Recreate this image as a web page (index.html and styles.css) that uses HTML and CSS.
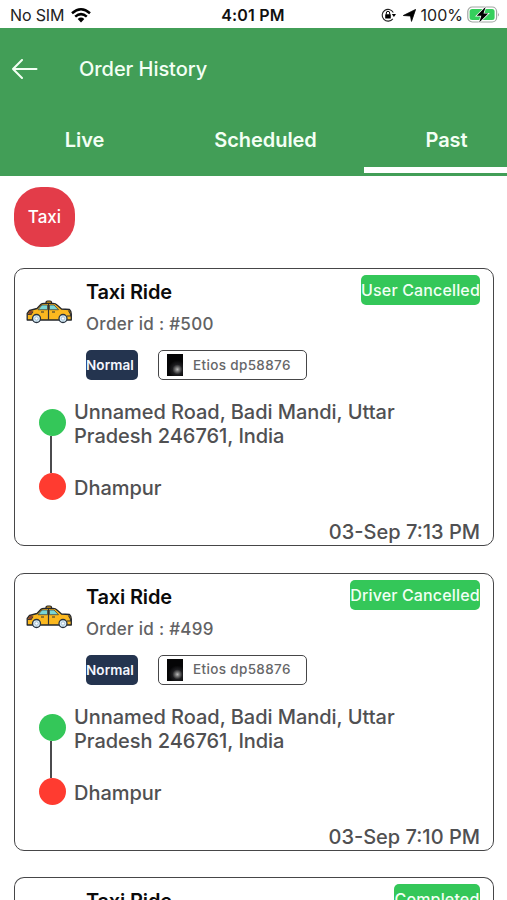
FILE: index.html
```html
<!DOCTYPE html>
<html lang="en">
<head>
<meta charset="utf-8">
<title>Order History</title>
<link rel="stylesheet" href="styles.css">
</head>
<body>
<svg class="defs" aria-hidden="true">
  <symbol id="taxi" viewBox="0 0 46 24">
    <path d="M20 4V2.2Q20 1 21.500 1H24Q25.500 1 25.500 2.200V4Z" fill="#d99a1c" stroke="#222" stroke-width="1.200"/>
    <path d="M1.200 19.500V13.500L3.500 10.500Q8 9.300 11 8.500L15 4.300Q16 3.300 18 3.300H27Q29.500 3.300 31 5L35.500 9L43.500 9.500Q45.300 11 45.300 14V20H1.200Z" fill="#fbb81f" stroke="#24272b" stroke-width="1.300" stroke-linejoin="round"/>
    <path d="M12 9.700L16 5H21.500V9.700ZM23.500 9.700V5H28L32.500 9.700Z" fill="#79d6d5" stroke="#333" stroke-width=".7"/>
    <path d="M22.500 4V20M1.500 14.500H5L7 11.500M42.500 10.500L44.500 14V16H41M15 12H18M26 12H29" fill="none" stroke="#333" stroke-width="1.200"/>
    <path d="M2 14L4 10.800H7L5 14.500Z" fill="#8c4528"/>
    <g fill="#d7edf9" stroke="#293440" stroke-width="1.300"><circle cx="10.500" cy="18.500" r="4"/><circle cx="37" cy="18.500" r="4"/></g>
    <g fill="#fff" stroke="#8daac0" stroke-width=".7"><circle cx="10.500" cy="18.500" r="1.700"/><circle cx="37" cy="18.500" r="1.700"/></g>
  </symbol>
</svg>
<header class="status">
  <div class="carrier"><span>No SIM</span>
    <svg width="20" height="15" viewBox="0 0 20 15"><g fill="none" stroke="#000" stroke-width="2.500"><path d="M1 5.200Q10-2.600 19 5.200"/><path d="M4.200 8.600Q10 3.600 15.800 8.600"/></g><path d="M6.700 11Q10 8.200 13.300 11L10 14.500Z"/></svg>
  </div>
  <div class="clock">4:01 PM</div>
  <div class="indicators">
    <svg width="15" height="14" viewBox="0 0 15 14"><path d="M11.800 10.800A5.900 5.900 0 1 1 12.300 4.500" fill="none" stroke="#222" stroke-width="1.100"/><path d="M10.800 6H15L12.900 9Z"/><rect x="4.200" y="6.200" width="5.600" height="4.200" rx=".5"/><path d="M5.300 6.500V5A1.700 1.700 0 0 1 8.700 5V6.500" fill="none" stroke="#000"/></svg>
    <svg class="arrow" width="13" height="13" viewBox="0 0 13 13"><path d="M12.600.4L8.500 12.400L7.500 7L.3 6.500Z" stroke="#000" stroke-width=".8" stroke-linejoin="round"/></svg>
    <span>100%</span>
    <svg class="battery" width="33" height="18" viewBox="0 0 33 18"><rect x=".8" y="1" width="28.800" height="15" rx="4.500" fill="#fff" stroke="#a2a6a3" stroke-width="1.200"/><rect x="2.600" y="3" width="25" height="11" rx="2.500" fill="#35cf5c"/><path d="M31 6.500Q32.500 8.500 31 10.500Z" fill="#999"/><path d="M18.700.8L9.700 9.700H14.300L12.200 16.600L21.200 7.600H16.500Z" stroke="#fff" stroke-width="1.400" paint-order="stroke"/></svg>
  </div>
</header>
<div class="appbar">
  <div class="titlebar">
    <svg width="26" height="20" viewBox="0 0 26 20" fill="none" stroke="#f3fff4" stroke-width="2" stroke-linecap="round" stroke-linejoin="round"><path d="M1 10H24.500M10 1L1 10L10 19"/></svg>
    <h1>Order History</h1>
  </div>
  <nav class="tabs"><a class="live">Live</a><a class="scheduled">Scheduled</a><a class="past">Past</a></nav>
</div>
<main>
  <button class="filter">Taxi</button>
  <article class="card">
    <div class="top"><svg class="taxi"><use href="#taxi"/></svg><div class="order"><h2>Taxi Ride</h2><p>Order id : #500</p></div><span class="state user">User Cancelled</span></div>
    <div class="tags"><span class="normal">Normal</span><span class="vehicle"><i></i><span>Etios dp58876</span></span></div>
    <div class="route"><div class="track"><i class="pickup"></i><i class="line"></i><i class="drop"></i></div><div class="places"><p>Unnamed Road, Badi Mandi, Uttar<br>Pradesh 246761, India</p><p>Dhampur</p></div></div>
    <time>03-Sep 7:13 PM</time>
  </article>
  <article class="card">
    <div class="top"><svg class="taxi"><use href="#taxi"/></svg><div class="order"><h2>Taxi Ride</h2><p>Order id : #499</p></div><span class="state driver">Driver Cancelled</span></div>
    <div class="tags"><span class="normal">Normal</span><span class="vehicle"><i></i><span>Etios dp58876</span></span></div>
    <div class="route"><div class="track"><i class="pickup"></i><i class="line"></i><i class="drop"></i></div><div class="places"><p>Unnamed Road, Badi Mandi, Uttar<br>Pradesh 246761, India</p><p>Dhampur</p></div></div>
    <time>03-Sep 7:10 PM</time>
  </article>
  <article class="card last">
    <div class="top"><div class="taxi"></div><div class="order"><h2>Taxi Ride</h2></div><span class="state completed">Completed</span></div>
  </article>
</main>
</body>
</html>
```
FILE: styles.css
```css
* { box-sizing: border-box; }
body { margin: 0; height: 900px; overflow: hidden; background: #fff; font-family: Inter, "Liberation Sans", sans-serif; color: #505052; white-space: nowrap; }
h1, h2, p { margin: 0; }
i { display: block; }
svg { flex: none; }
.defs { display: none; }
.status { height: 28px; display: grid; grid-template-columns: 1fr auto 1fr; align-items: center; padding: 2px 7px 0 10px; color: #222; font-size: 16px; }
.carrier, .indicators { display: flex; align-items: center; }
.carrier { gap: 7px; letter-spacing: -.15px; }
.clock { font-weight: 600; color: #111; letter-spacing: .2px; position: relative; left: -2px; }
.indicators { justify-content: flex-end; }
.arrow { margin: 0 5px 0 7px; }
.battery { margin-left: 4px; }
.appbar { height: 148px; background: #429e57; color: #f3fff4; display: flex; flex-direction: column; }
.titlebar { height: 82px; display: flex; align-items: center; padding-left: 12px; gap: 41px; }
h1 { font-size: 20px; font-weight: 500; letter-spacing: -.05px; }
.tabs { height: 66px; display: grid; grid-template-columns: 169px 195px 1fr; font-size: 20px; font-weight: 600; text-align: center; letter-spacing: -.05px; }
.tabs a { padding-top: 18px; line-height: 24px; }
.scheduled { padding-right: 2px; }
.past { border-bottom: 6px solid #fff; margin-bottom: 3px; padding-left: 22px; }
main { padding: 11px 13px 0 14px; height: 724px; overflow: hidden; }
.filter { display: block; width: 61px; height: 60px; border: 0; border-radius: 27px; background: #e33c49; color: #fff; font: 500 17px Inter, sans-serif; padding: 0; margin-bottom: 21px; }
.card { height: 278px; margin-bottom: 26.600px; border: 1.5px solid #464648; border-radius: 10px; padding: 6px 13px 0 11px; display: flex; flex-direction: column; }
.last { height: 24px; margin: 0; overflow: hidden; border-bottom: 0; border-radius: 10px 10px 0 0; }
.top { height: 75px; display: flex; align-items: flex-start; flex: none; }
.taxi { width: 46px; height: 24px; margin: 25px 14px 0 0; flex: none; }
.order { flex: 1; padding-top: 5px; }
h2 { font-size: 20px; line-height: 24px; font-weight: 600; color: #0b0b0b; letter-spacing: -.18px; }
.order p { font-size: 17px; line-height: 21px; font-weight: 500; margin-top: 10px; color: #626264; letter-spacing: .3px; }
.state { height: 30px; line-height: 30px; border-radius: 5px; background: #34c759; color: #f1fff4; font-size: 16px; font-weight: 500; letter-spacing: .15px; text-align: center; }
.user { width: 119px; }
.driver { width: 130px; }
.completed { width: 86px; }
.tags { height: 30px; display: flex; gap: 20px; padding-left: 60px; }
.normal { width: 52px; border-radius: 5px; background: #24344f; color: #f4f7ff; line-height: 30px; font-size: 13.500px; font-weight: 600; letter-spacing: .1px; }
.vehicle { width: 149px; border: 1.5px solid #464648; border-radius: 5px; display: flex; align-items: center; padding-left: 8px; gap: 10px; font-size: 13.500px; letter-spacing: .35px; font-weight: 500; color: #666668; line-height: 16px; }
.vehicle > span { padding-bottom: 1px; }
.vehicle i { width: 16px; height: 22px; background: radial-gradient(circle at 65% 70%, #bbb 0, #777 2px, #1d1d20 5px, #050506 9px); }
.route { height: 127px; display: flex; padding: 20px 0 0 13px; gap: 8px; font-size: 20px; font-weight: 500; line-height: 24px; letter-spacing: -.04px; }
.track { width: 27px; height: 91px; margin-top: 9px; display: flex; flex-direction: column; }
.pickup, .drop { width: 27px; height: 27px; border-radius: 50%; background: #34c759; }
.drop { background: #ff3b30; }
.line { width: 2px; flex: 1; margin-left: 11px; background: #4b4b4d; }
.places p + p { margin-top: 28px; }
time { align-self: flex-end; font-size: 20px; line-height: 24px; font-weight: 500; margin-top: 13px; }
```
